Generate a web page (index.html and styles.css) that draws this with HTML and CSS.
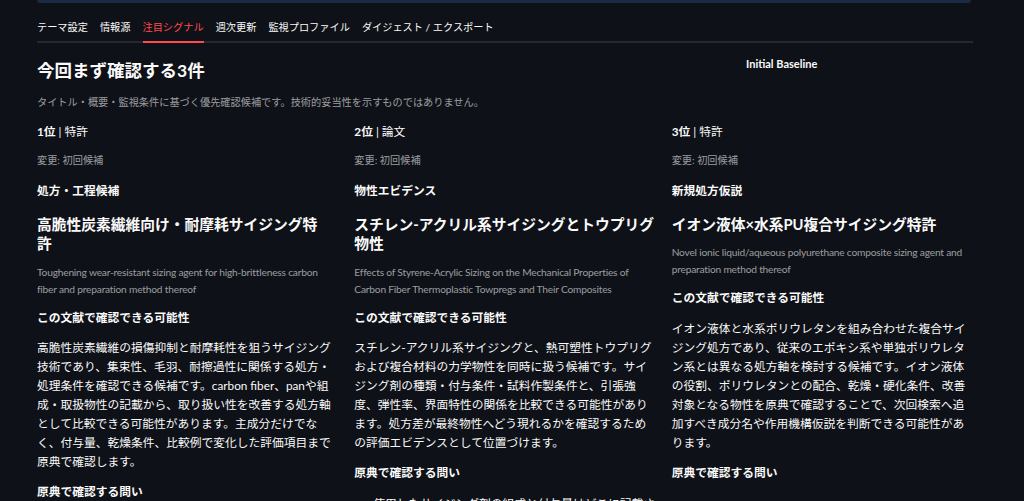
FILE: index.html
```html
<!DOCTYPE html>
<html lang="ja">
<head>
    <meta charset="UTF-8">
    <meta name="viewport" content="width=device-width, initial-scale=1.0">
    <title>注目シグナル</title>
    <link rel="stylesheet" href="styles.css">
</head>
<body>
    <main class="page">
        <div class="notice-edge"></div>

        <nav class="tabs">
            <span class="tab">テーマ設定</span>
            <span class="tab">情報源</span>
            <span class="tab active">注目シグナル</span>
            <span class="tab">週次更新</span>
            <span class="tab">監視プロファイル</span>
            <span class="tab">ダイジェスト / エクスポート</span>
        </nav>

        <section class="intro">
            <div class="intro-text">
                <h2>今回まず確認する3件</h2>
                <p class="caption">タイトル・概要・監視条件に基づく優先確認候補です。技術的妥当性を示すものではありません。</p>
            </div>
            <div class="chart-title">Initial Baseline</div>
        </section>

        <section class="signals">
            <article class="signal">
                <p class="rank"><strong>1位</strong> | 特許</p>
                <p class="caption meta">変更: 初回候補</p>
                <p class="kind">処方・工程候補</p>
                <h4>高脆性炭素繊維向け・耐摩耗サイジング特<span class="tail">許<a class="anchor" href="#"></a></span></h4>
                <p class="caption original">Toughening wear-resistant sizing agent for high-brittleness carbon fiber and preparation method thereof</p>
                <p class="label">この文献で確認できる可能性</p>
                <p class="body">高脆性炭素繊維の損傷抑制と耐摩耗性を狙うサイジング技術であり、集束性、毛羽、耐擦過性に関係する処方・処理条件を確認できる候補です。carbon fiber、panや組成・取扱物性の記載から、取り扱い性を改善する処方軸として比較できる可能性があります。主成分だけでなく、付与量、乾燥条件、比較例で変化した評価項目まで原典で確認します。</p>
                <p class="label next">原典で確認する問い</p>
                <ul class="questions">
                    <li>耐摩耗性の評価方法と比較例の条件は何か</li>
                    <li>付与量と乾燥条件の範囲はどこまでか</li>
                </ul>
            </article>

            <article class="signal">
                <p class="rank"><strong>2位</strong> | 論文</p>
                <p class="caption meta">変更: 初回候補</p>
                <p class="kind">物性エビデンス</p>
                <h4>スチレン-アクリル系サイジングとトウプリグ物<span class="tail">性<a class="anchor" href="#"></a></span></h4>
                <p class="caption original">Effects of Styrene-Acrylic Sizing on the Mechanical Properties of Carbon Fiber Thermoplastic Towpregs and Their Composites</p>
                <p class="label">この文献で確認できる可能性</p>
                <p class="body">スチレン-アクリル系サイジングと、熱可塑性トウプリグおよび複合材料の力学物性を同時に扱う候補です。サイジング剤の種類・付与条件・試料作製条件と、引張強度、弾性率、界面特性の関係を比較できる可能性があります。処方差が最終物性へどう現れるかを確認するための評価エビデンスとして位置づけます。</p>
                <p class="label next">原典で確認する問い</p>
                <ul class="questions">
                    <li>使用したサイジング剤の組成と付与量はどこに記載されているか</li>
                    <li>界面特性の評価手法は何か</li>
                </ul>
            </article>

            <article class="signal">
                <p class="rank"><strong>3位</strong> | 特許</p>
                <p class="caption meta">変更: 初回候補</p>
                <p class="kind">新規処方仮説</p>
                <h4>イオン液体×水系PU複合サイジング特<span class="tail">許<a class="anchor" href="#"></a></span></h4>
                <p class="caption original">Novel ionic liquid/aqueous polyurethane composite sizing agent and preparation method thereof</p>
                <p class="label">この文献で確認できる可能性</p>
                <p class="body">イオン液体と水系ポリウレタンを組み合わせた複合サイジング処方であり、従来のエポキシ系や単独ポリウレタン系とは異なる処方軸を検討する候補です。イオン液体の役割、ポリウレタンとの配合、乾燥・硬化条件、改善対象となる物性を原典で確認することで、次回検索へ追加すべき成分名や作用機構仮説を判断できる可能性があります。</p>
                <p class="label next">原典で確認する問い</p>
                <ul class="questions later">
                    <li>イオン液体の種類と配合比はどれか</li>
                    <li>硬化条件と改善された物性は何か</li>
                </ul>
            </article>
        </section>
    </main>
</body>
</html>
```

FILE: styles.css
```css
*{
    margin: 0;
    padding: 0;
    box-sizing: border-box;
}

:root{
    --background: #0e1117;
    --text: #fafafa;
    --muted: rgba(250, 250, 250, 0.6);
    --line: #262730;
    --red: #ff4b4b;
    --notice: #1b2a43;
    --sans: "Lato", "Noto Sans CJK JP", sans-serif;
}

body{
    background-color: var(--background);
    color: var(--text);
    font-family: var(--sans);
    font-size: 11.75px;
    line-height: 19px;
}

.page{
    padding: 0 51px 0 37px;
}

/* bottom edge of the info box above the tabs */
.notice-edge{
    height: 3px;
    margin-right: 2px;
    background-color: var(--notice);
    border-radius: 0 0 4px 4px;
}

.tabs{
    display: flex;
    gap: 12px;
    margin-top: 16px;
    border-bottom: 2px solid var(--line);
    font-size: 10.2px;
    line-height: 16px;
}

.tab{
    padding-bottom: 6px;
    margin-bottom: -2px;
    border-bottom: 2px solid transparent;
}

.tab.active{
    color: var(--red);
    border-bottom-color: var(--red);
}

.intro{
    display: flex;
    align-items: flex-start;
}

.intro-text{
    flex: 1;
}

.intro h2{
    margin-top: 15.5px;
    font-size: 17.5px;
    line-height: 24px;
    font-weight: 700;
}

.caption{
    color: var(--muted);
    font-size: 10.2px;
    line-height: 16px;
}

.intro .caption{
    margin-top: 11px;
}

.chart-title{
    width: 304px;
    margin-top: 14px;
    padding-left: 77px;
    font-size: 11px;
    line-height: 14px;
    font-weight: 700;
}

.signals{
    display: grid;
    grid-template-columns: repeat(3, 1fr);
    column-gap: 16px;
    margin-top: 12.5px;
}

.rank strong{
    font-weight: 700;
}

.meta{
    margin-top: 11px;
}

.kind,
.label{
    font-weight: 700;
}

.kind{
    margin-top: 13px;
}

.signal h4{
    margin-top: 14.5px;
    font-size: 14.75px;
    line-height: 19.5px;
    font-weight: 700;
}

/* last glyph stays together with the hidden heading link */
.tail{
    white-space: nowrap;
}

.anchor{
    display: inline-block;
    width: 12px;
    height: 12px;
    visibility: hidden;
}

.original{
    margin-top: 10px;
    line-height: 17px;
    letter-spacing: -0.2px;
}

.label{
    margin-top: 10px;
}

.body{
    margin-top: 11.5px;
    line-height: 19.08px;
}

.label.next{
    margin-top: 10.5px;
}

.questions{
    margin-top: 12px;
    padding-left: 19px;
}

.questions.later{
    margin-top: 16px;
}
```
